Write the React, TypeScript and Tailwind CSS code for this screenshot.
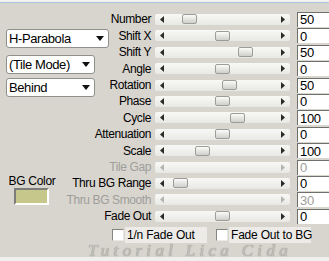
import React from "react";

type Row = {
  label: string;
  value: string;
  thumb?: number;
  disabled?: boolean;
};

const rows: Row[] = [
  { label: "Number", value: "50", thumb: 182 },
  { label: "Shift X", value: "0", thumb: 215 },
  { label: "Shift Y", value: "50", thumb: 238 },
  { label: "Angle", value: "0", thumb: 215 },
  { label: "Rotation", value: "50", thumb: 222 },
  { label: "Phase", value: "0", thumb: 215 },
  { label: "Cycle", value: "100", thumb: 230 },
  { label: "Attenuation", value: "0", thumb: 215 },
  { label: "Scale", value: "100", thumb: 195 },
  { label: "Tile Gap", value: "0", disabled: true },
  { label: "Thru BG Range", value: "0", thumb: 173 },
  { label: "Thru BG Smooth", value: "30", disabled: true },
  { label: "Fade Out", value: "0", thumb: 215 },
];

const Arrow = ({ dir, disabled }: { dir: "left" | "right"; disabled?: boolean }) => (
  <svg width="4" height="7" viewBox="0 0 4 7" className="shrink-0">
    <path
      d={dir === "left" ? "M4 0 L0 3.5 L4 7 Z" : "M0 0 L4 3.5 L0 7 Z"}
      fill={disabled ? "#b4b4b0" : "#2a2a2a"}
    />
  </svg>
);

const Slider = ({ thumb, disabled }: { thumb?: number; disabled?: boolean }) => (
  <div className="relative ml-[4px] flex h-[11px] w-[135px] shrink-0 items-center justify-between rounded-[2px] bg-gradient-to-b from-[#f8f8f6] to-[#e8e8e4] px-[5px]">
    <Arrow dir="left" disabled={disabled} />
    <Arrow dir="right" disabled={disabled} />
    {thumb !== undefined && (
      <div
        className="absolute top-[0.5px] h-[10px] w-[15px] rounded-[2px] border border-[#9c9c98] bg-gradient-to-b from-[#fbfbfa] to-[#cfcfcb]"
        style={{ left: thumb - 155 }}
      />
    )}
  </div>
);

const Dropdown = ({ text, width }: { text: string; width: string }) => (
  <div
    className={`flex h-[19px] items-center justify-between rounded-[3px] border border-[#8f8f8c] bg-white pl-[2px] pr-[4px] text-[13px] tracking-[-0.4px] text-black ${width}`}
  >
    <span className="whitespace-nowrap">{text}</span>
    <svg width="8" height="5" viewBox="0 0 8 5">
      <path d="M0 0 H8 L4 5 Z" fill="#111" />
    </svg>
  </div>
);

const Check = ({ label, width }: { label: string; width: string }) => (
  <div className="flex items-center">
    <div className="h-[12px] w-[12px] border-t border-l border-b border-r border-t-[#85857f] border-l-[#85857f] border-b-[#e8e8e4] border-r-[#e8e8e4] bg-white" />
    <div className={`ml-px flex h-[16px] items-center whitespace-nowrap bg-[#ecebe8] pl-[2px] text-[12px] tracking-[-0.2px] text-black ${width}`}>
      {label}
    </div>
  </div>
);

export default function App() {
  return (
    <div className="h-[261px] w-[329px] overflow-hidden bg-[#d8d5cf] font-['Liberation_Sans',sans-serif] leading-none">
      <div className="h-[2px] bg-[#f2f2f0]" />
      <div className="h-[1px] bg-[#a9c3df]" />

      <div className="flex">
        <div className="w-[62px] shrink-0 pl-[6px] pt-[26px]">
          <Dropdown text="H-Parabola" width="w-[103px]" />
          <div className="mt-[7px]">
            <Dropdown text="(Tile Mode)" width="w-[89px]" />
          </div>
          <div className="mt-[4px]">
            <Dropdown text="Behind" width="w-[89px]" />
          </div>
          <div className="mt-[77px] w-[52px] whitespace-nowrap text-center text-[12px] leading-[14px] tracking-[-0.3px] text-black">
            BG Color
          </div>
          <div className="ml-[8px] h-[17px] w-[35px] border-t-2 border-l-2 border-b-2 border-r-2 border-t-[#7c7c7a] border-l-[#7c7c7a] border-b-white border-r-white bg-[#c6c78a]" />
        </div>

        <div className="flex-1 pt-[8.3px]">
          {rows.map((r) => (
            <div key={r.label} className="flex h-[16.4px] items-center">
              <div
                className={`w-[89px] shrink-0 whitespace-nowrap text-right text-[12px] tracking-[-0.4px] ${r.disabled ? "text-[#9e9e9a]" : "text-black"}`}
              >
                <span className="float-right">{r.label}</span>
              </div>
              <Slider thumb={r.thumb} disabled={r.disabled} />
              <div
                className={`ml-[7px] flex h-[15px] w-[40px] shrink-0 items-center border-t border-l border-[#6f6f6c] bg-white pl-[2px] text-[13px] tracking-[-0.3px] ${r.disabled ? "text-[#9e9e9a]" : "text-black"}`}
              >
                {r.value}
              </div>
            </div>
          ))}
        </div>
      </div>

      <div className="mt-[3px] flex gap-[9px] pl-[112px]">
        <Check label="1/n Fade Out" width="w-[82px]" />
        <Check label="Fade Out to BG" width="w-[82px]" />
      </div>

      <div className="whitespace-nowrap pl-[88px] pt-[3px] font-['Liberation_Serif',serif] text-[17px] italic leading-[10px] tracking-[4.3px] text-[#c4c1bb] [text-shadow:0_0_1px_#7c7a75]">
        Tutorial Lica Cida
      </div>

      <div className="mt-[1px] h-[4px] bg-[#efefed]" />
    </div>
  );
}
